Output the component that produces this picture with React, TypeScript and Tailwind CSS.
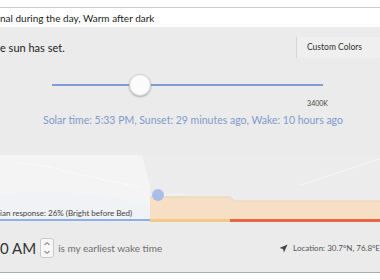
import React from 'react';

const font = { fontFamily: 'Lato, "Open Sans", sans-serif' };

const Chart = () => (
  <div className="relative h-[68px] w-full">
    <svg width="380" height="68" viewBox="0 0 380 68" className="absolute inset-0">
      <rect x="0" y="0" width="380" height="68" fill="#ececec" />
      <path d="M0 0 L142 0 L150 30 L150 64 L0 64 Z" fill="#f4f4f5" />
      <path d="M0 40 Q60 30 150 50 L150 64 L0 64 Z" fill="#eef1f6" opacity="0.7" />
      <path d="M17 8 Q45 10 62 15 T140 32" fill="none" stroke="#ffffff" strokeWidth="1.2" strokeDasharray="1.5 2" />
      <path d="M150 42 L230 42 L234 46 L380 46 L380 64 L150 64 Z" fill="#f7dfc5" />
      <path d="M150 42 L230 42 L234 46 L380 46" fill="none" stroke="#ead2b6" strokeWidth="1" />
      <path d="M300 30 L380 4" fill="none" stroke="#f7f7f7" strokeWidth="1" />
      <path d="M164 40 L185 39" fill="none" stroke="#f6f6f6" strokeWidth="1" />
      <circle cx="158" cy="40" r="6" fill="#aabee6" />
      <rect x="0" y="64" width="150" height="2" fill="#8eb0ea" />
      <rect x="150" y="64" width="80" height="3" fill="#f5c985" />
      <rect x="230" y="64" width="150" height="3" fill="#e9653e" />
    </svg>
    <div className="absolute left-0 top-[54px] text-[8px] leading-none text-[#444]">
      ian response: 26% (Bright before Bed)
    </div>
  </div>
);

const App = () => {
  return (
    <div className="w-[380px] h-[280px] overflow-hidden bg-white flex flex-col" style={font}>
      <div className="h-[7px] bg-white" />
      <div className="h-px bg-[#c9ccd2]" />
      <div className="h-[19px] bg-white flex items-center text-[10px] text-[#222] leading-none">
        nal during the day, Warm after dark
      </div>
      <div className="flex-1 bg-[#ebebeb] flex flex-col">
        <div className="flex items-center justify-between pt-[10px]">
          <span className="text-[11px] text-[#222] leading-none">e sun has set.</span>
          <div className="h-[21px] w-[84px] bg-[#efefef] border-l border-[#d5d5d5] flex items-center pl-[10px] text-[8.5px] text-[#333]">
            Custom Colors
          </div>
        </div>
        <div className="relative mt-[16px] ml-[52px] w-[271px] h-[22px] flex items-center">
          <div className="h-[2px] w-full bg-[#7f9dd2]" />
          <div className="absolute left-[77px] top-0 w-[22px] h-[22px] rounded-full bg-[#fbfbfb] border border-[#d4d4d4] shadow-[0_1px_2px_rgba(0,0,0,0.25)]" />
        </div>
        <div className="flex justify-end pr-[52px] mt-[4px] text-[7px] leading-none text-[#444]">3400K</div>
        <div className="pl-[43px] mt-[8px] text-[10.5px] leading-none text-[#7f9acb]">
          Solar time: 5:33 PM, Sunset: 29 minutes ago, Wake: 10 hours ago
        </div>
        <div className="mt-[29px]">
          <Chart />
        </div>
        <div className="flex-1 flex items-center pt-[2px]">
          <span className="text-[15px] text-[#333] leading-none">0 AM</span>
          <div className="ml-[4px] w-[14px] h-[20px] bg-[#f7f7f7] border border-[#c9c9c9] rounded-[3px] flex flex-col items-center justify-center">
            <svg width="8" height="16" viewBox="0 0 8 16">
              <path d="M1.5 5 L4 2.5 L6.5 5" fill="none" stroke="#555" strokeWidth="1" />
              <path d="M1.5 11 L4 13.5 L6.5 11" fill="none" stroke="#555" strokeWidth="1" />
            </svg>
          </div>
          <span className="ml-[4px] text-[10px] text-[#6e6e6e] leading-none">is my earliest wake time</span>
          <div className="ml-auto flex items-center gap-[5px] text-[8px] text-[#555] leading-none">
            <svg width="9" height="9" viewBox="0 0 10 10">
              <path d="M9.5 0.5 L0.5 4.5 L4.5 5.5 L5.5 9.5 Z" fill="#444" />
            </svg>
            <span className="whitespace-nowrap">Location: 30.7°N, 76.8°E</span>
          </div>
        </div>
      </div>
      <div className="h-px bg-[#a9adb4]" />
      <div className="h-[7px] bg-white" />
    </div>
  );
};

export default App;
